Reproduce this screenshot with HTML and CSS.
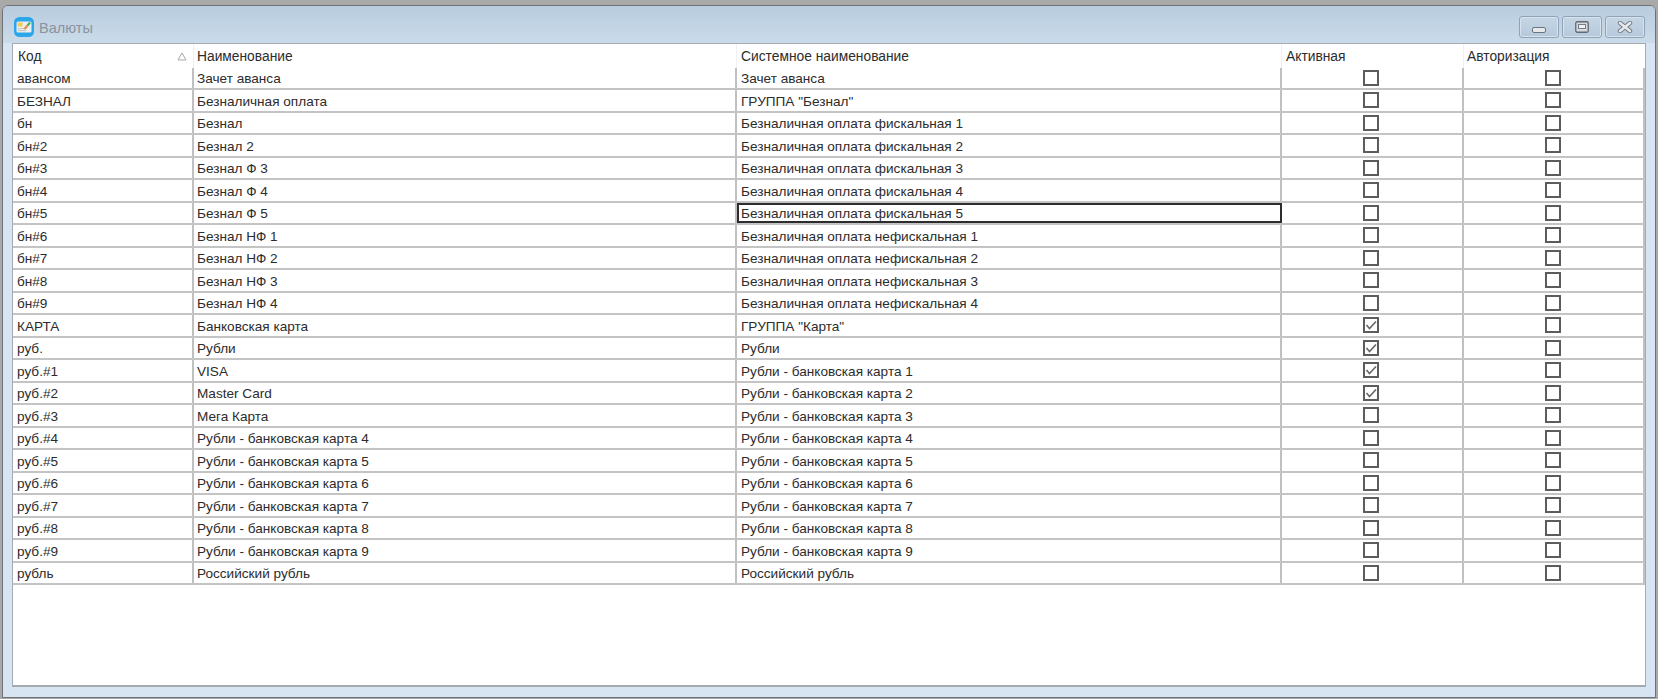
FILE: index.html
```html
<!DOCTYPE html>
<html lang="ru">
<head>
<meta charset="utf-8">
<title>Валюты</title>
<link rel="stylesheet" href="styles.css">
</head>
<body>
<div class="window">
  <div class="titlebar">
    <svg class="app-icon" viewBox="0 0 20 20" width="20" height="20">
      <rect x="0" y="0" width="20" height="20" rx="5.5" fill="#2ba6ea"/>
      <rect x="2.5" y="4.5" width="15" height="11" rx="1.5" fill="#e9eef0"/>
      <rect x="3.5" y="5.5" width="5" height="4" fill="#f5c95a"/>
      <rect x="4" y="11" width="7" height="1.2" fill="#c9c9c0"/>
      <rect x="4" y="13" width="8" height="1.2" fill="#c9c9c0"/>
      <path d="M10.5 12 L13.5 8.5" stroke="#e88a3c" stroke-width="2" fill="none"/>
      <path d="M13.5 8.5 L16 5.5" stroke="#3fae62" stroke-width="2" fill="none"/>
    </svg>
    <span class="title">Валюты</span>
    <div class="controls">
      <div class="ctl ctl-min"><svg class="min-glyph" viewBox="0 0 14 6" width="14" height="6"><rect x="0.5" y="0.5" width="13" height="5" rx="1.5" fill="#e6e8ea" stroke="#6a7580"/></svg></div>
      <div class="ctl ctl-max"><svg viewBox="0 0 14 12" width="14" height="12"><rect x="0.75" y="0.75" width="12.5" height="10.5" rx="1.5" fill="#d6d8da" stroke="#5f6a76" stroke-width="1.3"/><rect x="3.5" y="3.5" width="7" height="4" fill="#eef0f2" stroke="#6a7580" stroke-width="0.9"/></svg></div>
      <div class="ctl ctl-close"><svg viewBox="0 0 16 12" width="16" height="12"><path d="M3 2 L13 10 M13 2 L3 10" stroke="#6a7580" stroke-width="4.4" stroke-linecap="round"/><path d="M3 2 L13 10 M13 2 L3 10" stroke="#e6e8ea" stroke-width="2.8" stroke-linecap="round"/></svg></div>
    </div>
  </div>
  <div class="content">
    <div class="table" id="table">
      <div class="row head">
        <div class="cell sort">Код<svg class="sort-icon" viewBox="0 0 10 9" width="10" height="9"><path d="M5 1 L9 8 H1 Z" fill="none" stroke="#a8a8a8"/></svg></div>
        <div class="cell">Наименование</div>
        <div class="cell">Системное наименование</div>
        <div class="cell">Активная</div>
        <div class="cell">Авторизация</div>
      </div>
      <div class="row"><div class="cell">авансом</div><div class="cell">Зачет аванса</div><div class="cell">Зачет аванса</div><div class="cell chk"><span class="box"></span></div><div class="cell chk"><span class="box"></span></div></div>
      <div class="row"><div class="cell">БЕЗНАЛ</div><div class="cell">Безналичная оплата</div><div class="cell">ГРУППА "Безнал"</div><div class="cell chk"><span class="box"></span></div><div class="cell chk"><span class="box"></span></div></div>
      <div class="row"><div class="cell">бн</div><div class="cell">Безнал</div><div class="cell">Безналичная оплата фискальная 1</div><div class="cell chk"><span class="box"></span></div><div class="cell chk"><span class="box"></span></div></div>
      <div class="row"><div class="cell">бн#2</div><div class="cell">Безнал 2</div><div class="cell">Безналичная оплата фискальная 2</div><div class="cell chk"><span class="box"></span></div><div class="cell chk"><span class="box"></span></div></div>
      <div class="row"><div class="cell">бн#3</div><div class="cell">Безнал Ф 3</div><div class="cell">Безналичная оплата фискальная 3</div><div class="cell chk"><span class="box"></span></div><div class="cell chk"><span class="box"></span></div></div>
      <div class="row"><div class="cell">бн#4</div><div class="cell">Безнал Ф 4</div><div class="cell">Безналичная оплата фискальная 4</div><div class="cell chk"><span class="box"></span></div><div class="cell chk"><span class="box"></span></div></div>
      <div class="row"><div class="cell">бн#5</div><div class="cell">Безнал Ф 5</div><div class="cell selected">Безналичная оплата фискальная 5</div><div class="cell chk"><span class="box"></span></div><div class="cell chk"><span class="box"></span></div></div>
      <div class="row"><div class="cell">бн#6</div><div class="cell">Безнал НФ 1</div><div class="cell">Безналичная оплата нефискальная 1</div><div class="cell chk"><span class="box"></span></div><div class="cell chk"><span class="box"></span></div></div>
      <div class="row"><div class="cell">бн#7</div><div class="cell">Безнал НФ 2</div><div class="cell">Безналичная оплата нефискальная 2</div><div class="cell chk"><span class="box"></span></div><div class="cell chk"><span class="box"></span></div></div>
      <div class="row"><div class="cell">бн#8</div><div class="cell">Безнал НФ 3</div><div class="cell">Безналичная оплата нефискальная 3</div><div class="cell chk"><span class="box"></span></div><div class="cell chk"><span class="box"></span></div></div>
      <div class="row"><div class="cell">бн#9</div><div class="cell">Безнал НФ 4</div><div class="cell">Безналичная оплата нефискальная 4</div><div class="cell chk"><span class="box"></span></div><div class="cell chk"><span class="box"></span></div></div>
      <div class="row"><div class="cell">КАРТА</div><div class="cell">Банковская карта</div><div class="cell">ГРУППА "Карта"</div><div class="cell chk"><span class="box on"><svg viewBox="0 0 12 12" width="12" height="12"><path d="M1.5 6 L4.5 9.5 L11 2.5" fill="none" stroke="#666" stroke-width="1.6"/></svg></span></div><div class="cell chk"><span class="box"></span></div></div>
      <div class="row"><div class="cell">руб.</div><div class="cell">Рубли</div><div class="cell">Рубли</div><div class="cell chk"><span class="box on"><svg viewBox="0 0 12 12" width="12" height="12"><path d="M1.5 6 L4.5 9.5 L11 2.5" fill="none" stroke="#666" stroke-width="1.6"/></svg></span></div><div class="cell chk"><span class="box"></span></div></div>
      <div class="row"><div class="cell">руб.#1</div><div class="cell">VISA</div><div class="cell">Рубли - банковская карта 1</div><div class="cell chk"><span class="box on"><svg viewBox="0 0 12 12" width="12" height="12"><path d="M1.5 6 L4.5 9.5 L11 2.5" fill="none" stroke="#666" stroke-width="1.6"/></svg></span></div><div class="cell chk"><span class="box"></span></div></div>
      <div class="row"><div class="cell">руб.#2</div><div class="cell">Master Card</div><div class="cell">Рубли - банковская карта 2</div><div class="cell chk"><span class="box on"><svg viewBox="0 0 12 12" width="12" height="12"><path d="M1.5 6 L4.5 9.5 L11 2.5" fill="none" stroke="#666" stroke-width="1.6"/></svg></span></div><div class="cell chk"><span class="box"></span></div></div>
      <div class="row"><div class="cell">руб.#3</div><div class="cell">Мега Карта</div><div class="cell">Рубли - банковская карта 3</div><div class="cell chk"><span class="box"></span></div><div class="cell chk"><span class="box"></span></div></div>
      <div class="row"><div class="cell">руб.#4</div><div class="cell">Рубли - банковская карта 4</div><div class="cell">Рубли - банковская карта 4</div><div class="cell chk"><span class="box"></span></div><div class="cell chk"><span class="box"></span></div></div>
      <div class="row"><div class="cell">руб.#5</div><div class="cell">Рубли - банковская карта 5</div><div class="cell">Рубли - банковская карта 5</div><div class="cell chk"><span class="box"></span></div><div class="cell chk"><span class="box"></span></div></div>
      <div class="row"><div class="cell">руб.#6</div><div class="cell">Рубли - банковская карта 6</div><div class="cell">Рубли - банковская карта 6</div><div class="cell chk"><span class="box"></span></div><div class="cell chk"><span class="box"></span></div></div>
      <div class="row"><div class="cell">руб.#7</div><div class="cell">Рубли - банковская карта 7</div><div class="cell">Рубли - банковская карта 7</div><div class="cell chk"><span class="box"></span></div><div class="cell chk"><span class="box"></span></div></div>
      <div class="row"><div class="cell">руб.#8</div><div class="cell">Рубли - банковская карта 8</div><div class="cell">Рубли - банковская карта 8</div><div class="cell chk"><span class="box"></span></div><div class="cell chk"><span class="box"></span></div></div>
      <div class="row"><div class="cell">руб.#9</div><div class="cell">Рубли - банковская карта 9</div><div class="cell">Рубли - банковская карта 9</div><div class="cell chk"><span class="box"></span></div><div class="cell chk"><span class="box"></span></div></div>
      <div class="row"><div class="cell">рубль</div><div class="cell">Российский рубль</div><div class="cell">Российский рубль</div><div class="cell chk"><span class="box"></span></div><div class="cell chk"><span class="box"></span></div></div>
    </div>
  </div>
</div>
</body>
</html>
```

FILE: styles.css
```css
* { box-sizing: border-box; }
html, body { margin: 0; height: 100%; }
body {
  background: #a9a9a9;
  padding: 5px 2px 1px 2px;
  font-family: "Liberation Sans", Arial, sans-serif;
  font-size: 13.6px;
  color: #2c2c2c;
  overflow: hidden;
}
.window {
  height: 693px;
  border: 1px solid #6e7276;
  border-radius: 6px 6px 0 0;
  background: #d7e4f1;
  display: flex;
  flex-direction: column;
}
.titlebar {
  height: 37px;
  flex: none;
  display: flex;
  align-items: center;
  padding: 5px 10px 0 11px;
  background: linear-gradient(#b8ccde, #cbdbea);
  border-radius: 5px 5px 0 0;
}
.app-icon { flex: none; }
.title {
  margin-left: 5px;
  margin-top: 2px;
  font-size: 14.5px;
  color: #8b939c;
}
.controls { margin-left: auto; display: flex; gap: 3px; align-self: flex-start; margin-top: 5px; }
.ctl {
  width: 40px;
  height: 22px;
  border: 1px solid #8ea3b8;
  border-radius: 3px;
  background: linear-gradient(#c5d5e4, #b6c9dc);
  box-shadow: inset 0 0 0 1px #d8e3ee;
  display: flex;
  align-items: center;
  justify-content: center;
}
.min-glyph { margin-top: 6px; }
.content {
  flex: 1;
  min-height: 0;
  padding: 0 9px 10px 9px;
}
.table {
  height: 100%;
  background: #fff;
  border: 1px solid #a3abb3;
  border-bottom-width: 2px;
}
.row {
  display: grid;
  grid-template-columns: 181px 543px 545px 182px 181px;
  height: 22.5px;
  border-bottom: 2px solid #c4c4c4;
  width: 1632px;
}
.row.head { height: 23.5px; border-bottom: 0; font-size: 13.8px; }
.cell {
  display: flex;
  align-items: center;
  padding-left: 3px;
  padding-top: 2px;
  border-right: 2px solid #c0c0c0;
  white-space: nowrap;
  min-width: 0;
}
.cell:nth-child(3) { padding-left: 4px; }
.row.head .cell { border-right: 1px solid #f0f0f0; padding-top: 2px; padding-left: 4px; }
.row.head .cell:nth-child(2),
.row.head .cell:nth-child(5) { padding-left: 3px; }
.row.head .cell:last-child { border-right: 0; }
.row.head .cell:first-child { padding-left: 5px; }
.row .cell:first-child { padding-left: 4px; }
.sort { justify-content: space-between; padding-right: 6px; }
.sort-icon { flex: none; }
.chk { justify-content: center; padding-left: 0; padding-top: 0; padding-right: 2px; }
.box {
  width: 16px;
  height: 16px;
  border: 2px solid #5c5c5c;
  background: #fff;
  display: flex;
  align-items: center;
  justify-content: center;
}
.selected {
  outline: 2px solid #2d2d2d;
  outline-offset: -2px;
  position: relative;
  z-index: 1;
}
```
